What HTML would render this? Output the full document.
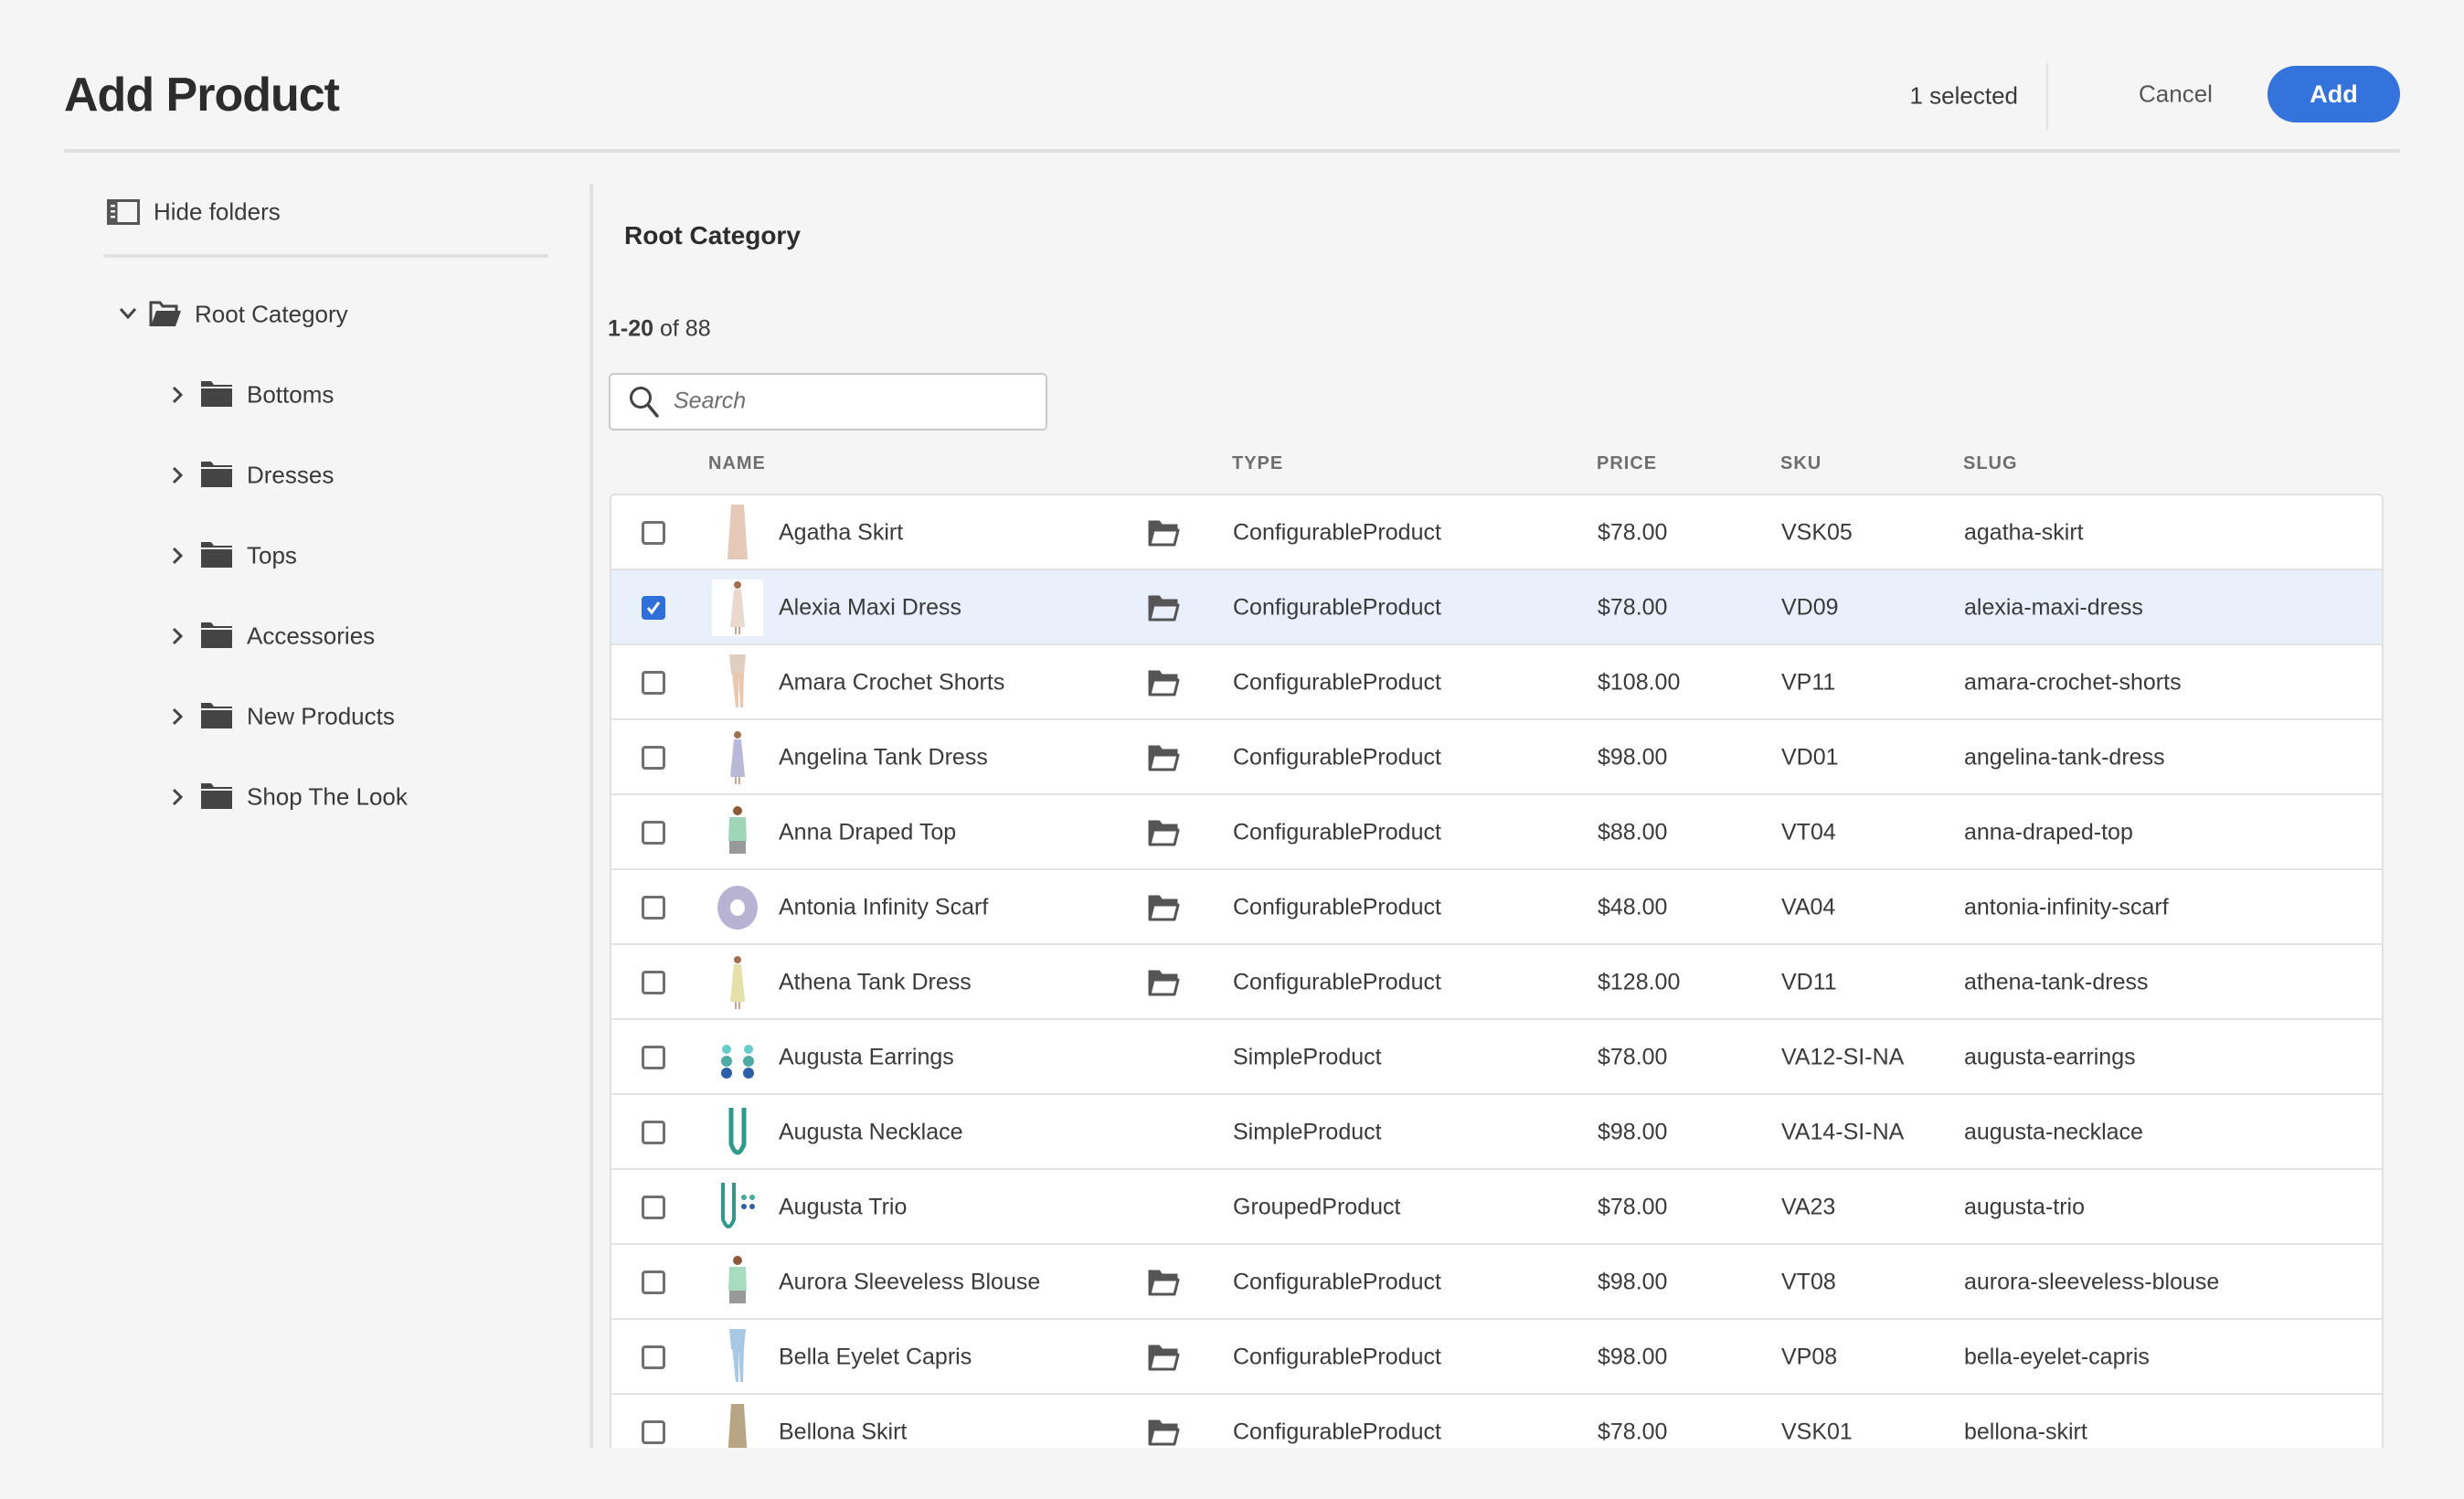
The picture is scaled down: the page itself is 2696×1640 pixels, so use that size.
<!DOCTYPE html>
<html><head><meta charset="utf-8"><style>
*{margin:0;padding:0;box-sizing:border-box}
body{width:2696px;height:1640px;background:#f5f5f5;font-family:"Liberation Sans",sans-serif;color:#2c2c2c;position:relative;overflow:hidden}
.a{position:absolute;white-space:nowrap}
.t{font-size:26px;color:#3a3a3a;transform:translateY(-50%)}
.tr{position:absolute;left:0;width:1941px;height:82px;border-bottom:2px solid #e1e1e1;background:#fff}
.tr.sel{background:#e9effb}
.cb{position:absolute;left:33px;top:28px;width:26px;height:26px;border:3px solid #707070;border-radius:4px}
.sel .cb{background:#2f6fdc;border-color:#2f6fdc}
.cell{position:absolute;top:41px;transform:translateY(-50%);font-size:25px;color:#3a3a3a;white-space:nowrap}
.th{position:absolute;top:496px;font-size:20px;color:#6e6e6e;letter-spacing:1px;font-weight:bold}
.fi{position:absolute;left:586px;top:26px}
.thumb{position:absolute;left:114px;top:10px}
</style></head><body>
<div class="a" style="left:70px;top:74px;font-size:52px;font-weight:bold;color:#2c2c2c;letter-spacing:-1px">Add Product</div>
<div class="a t" style="right:488px;top:105px;font-size:26px">1 selected</div>
<div class="a" style="left:2239px;top:69px;width:2px;height:72px;background:#e1e1e1"></div>
<div class="a t" style="left:2340px;top:103px;font-size:26px;color:#555">Cancel</div>
<div class="a" style="left:2481px;top:72px;width:145px;height:62px;border-radius:31px;background:#3473db;color:#fff;font-size:27px;font-weight:bold;text-align:center;line-height:62px">Add</div>
<div class="a" style="left:70px;top:163px;width:2556px;height:4px;background:#e1e1e1"></div>

<svg class="a" style="left:117px;top:218px" width="36" height="28" viewBox="0 0 36 28"><rect x="1.5" y="1.5" width="33" height="25" fill="none" stroke="#555" stroke-width="3"/><rect x="1.5" y="1.5" width="10" height="25" fill="#555"/><rect x="4" y="6" width="5" height="2.5" fill="#f5f5f5"/><rect x="4" y="12" width="5" height="2.5" fill="#f5f5f5"/><rect x="4" y="18" width="5" height="2.5" fill="#f5f5f5"/></svg>
<div class="a t" style="left:168px;top:232px">Hide folders</div>
<div class="a" style="left:113px;top:278px;width:487px;height:4px;background:#e1e1e1"></div>
<div class="a" style="left:645px;top:201px;width:4px;height:1383px;background:#e1e1e1"></div>

<svg class="a" style="left:130px;top:336px" width="20" height="14" viewBox="0 0 20 14"><path d="M2 2 L10 11 L18 2" fill="none" stroke="#444" stroke-width="3"/></svg>
<svg class="a" style="left:163px;top:329px" width="36" height="30" viewBox="0 0 36 30"><path d="M2 28 V2 H12 L15 6 H30 V11" fill="none" stroke="#444" stroke-width="3"/><path d="M2 28 L8 11 H35 L29 28 Z" fill="#444"/></svg>
<div class="a t" style="left:213px;top:344px">Root Category</div>

<div id="tree"></div>

<div class="a t" style="left:683px;top:258px;font-size:28px;font-weight:bold;color:#2c2c2c">Root Category</div>
<div class="a t" style="left:665px;top:360px;font-size:25px"><b>1-20</b> of 88</div>
<div class="a" style="left:666px;top:408px;width:480px;height:63px;border:2px solid #cacaca;border-radius:5px;background:#fff"></div>
<svg class="a" style="left:688px;top:422px" width="34" height="36" viewBox="0 0 34 36"><circle cx="13" cy="13" r="10.5" fill="none" stroke="#444" stroke-width="3"/><path d="M21 21 L31 33" stroke="#444" stroke-width="3.5" stroke-linecap="round"/></svg>
<div class="a t" style="left:737px;top:439px;font-style:italic;color:#6e6e6e;font-size:25px">Search</div>

<div class="th" style="left:775px">NAME</div>
<div class="th" style="left:1348px">TYPE</div>
<div class="th" style="left:1747px">PRICE</div>
<div class="th" style="left:1948px">SKU</div>
<div class="th" style="left:2148px">SLUG</div>

<div class="a" style="left:667px;top:540px;width:1941px;height:1044px;overflow:hidden;border:2px solid #e1e1e1;border-bottom:none;border-radius:6px 6px 0 0;background:#fff" id="tbl"></div>

<script>
var tree=["Bottoms","Dresses","Tops","Accessories","New Products","Shop The Look"];
var h="";
tree.forEach(function(n,i){var y=432+i*88;
h+='<svg class="a" style="left:187px;top:'+(y-10)+'px" width="14" height="20" viewBox="0 0 14 20"><path d="M3 2 L11 10 L3 18" fill="none" stroke="#444" stroke-width="3"/></svg>';
h+='<svg class="a" style="left:220px;top:'+(y-15)+'px" width="34" height="28" viewBox="0 0 34 28"><path d="M0 0 H11 L14 4 H34 V28 H0 Z" fill="#444"/><rect x="0" y="6" width="34" height="2" fill="#f5f5f5"/></svg>';
h+='<div class="a t" style="left:270px;top:'+y+'px">'+n+'</div>';});
document.getElementById("tree").innerHTML=h;
var C="ConfigurableProduct";
var rows=[
["Agatha Skirt",1,C,"$78.00","VSK05","agatha-skirt","#e6c9b8","skirt"],
["Alexia Maxi Dress",1,C,"$78.00","VD09","alexia-maxi-dress","#ead8cc","dress"],
["Amara Crochet Shorts",1,C,"$108.00","VP11","amara-crochet-shorts","#e0cfc0","legs"],
["Angelina Tank Dress",1,C,"$98.00","VD01","angelina-tank-dress","#b9b8d8","dress"],
["Anna Draped Top",1,C,"$88.00","VT04","anna-draped-top","#9fd6b8","top"],
["Antonia Infinity Scarf",1,C,"$48.00","VA04","antonia-infinity-scarf","#b8b3d3","scarf"],
["Athena Tank Dress",1,C,"$128.00","VD11","athena-tank-dress","#e4e0a8","dress"],
["Augusta Earrings",0,"SimpleProduct","$78.00","VA12-SI-NA","augusta-earrings","#4fa9a4","ear"],
["Augusta Necklace",0,"SimpleProduct","$98.00","VA14-SI-NA","augusta-necklace","#2f9a8c","neck"],
["Augusta Trio",0,"GroupedProduct","$78.00","VA23","augusta-trio","#2f9a8c","trio"],
["Aurora Sleeveless Blouse",1,C,"$98.00","VT08","aurora-sleeveless-blouse","#a8dcc0","top"],
["Bella Eyelet Capris",1,C,"$98.00","VP08","bella-eyelet-capris","#a9c8e6","legs"],
["Bellona Skirt",1,C,"$78.00","VSK01","bellona-skirt","#b8a584","skirt"]];
function thumb(k,c){var s='<svg class="thumb" width="48" height="62" viewBox="0 0 48 62">';
if(k=="skirt")s+='<path d="M17 0 H31 L35 60 H13 Z" fill="'+c+'"/>';
else if(k=="dress")s+='<circle cx="24" cy="6" r="4" fill="#a07050"/><path d="M20 11 H28 L32 52 H16 Z" fill="'+c+'"/><rect x="21" y="52" width="2" height="8" fill="#c8a890"/><rect x="25" y="52" width="2" height="8" fill="#c8a890"/>';
else if(k=="legs")s+='<path d="M15 0 H33 L31 22 H17 Z" fill="'+c+'"/><path d="M18 20 L22 58 H25 L25 24 L27 58 H30 L31 20 Z" fill="'+(c=="#a9c8e6"?c:"#e8c8b0")+'"/>';
else if(k=="top")s+='<circle cx="24" cy="7" r="5" fill="#8a5a3a"/><path d="M15 14 H33 L34 40 H14 Z" fill="'+c+'"/><rect x="15" y="40" width="18" height="14" fill="#999"/>';
else if(k=="scarf")s+='<ellipse cx="24" cy="31" rx="22" ry="24" fill="'+c+'"/><ellipse cx="24" cy="31" rx="8" ry="9" fill="#fff"/>';
else if(k=="ear")s+='<circle cx="12" cy="22" r="5" fill="#6cc"/><circle cx="12" cy="35" r="6" fill="'+c+'"/><circle cx="12" cy="48" r="6" fill="#2d5fa8"/><circle cx="36" cy="22" r="5" fill="#6cc"/><circle cx="36" cy="35" r="6" fill="'+c+'"/><circle cx="36" cy="48" r="6" fill="#2d5fa8"/>';
else if(k=="neck")s+='<path d="M17 4 V44 Q24 62 31 44 V4" fill="none" stroke="'+c+'" stroke-width="5"/>';
else s+='<path d="M8 4 V44 Q14 60 20 44 V4" fill="none" stroke="'+c+'" stroke-width="4"/><circle cx="31" cy="20" r="3" fill="#4a9"/><circle cx="40" cy="20" r="3" fill="#4a9"/><circle cx="31" cy="30" r="3" fill="#2d5fa8"/><circle cx="40" cy="30" r="3" fill="#2d5fa8"/>';
return s+'</svg>';}
var fold='<svg class="fi" width="36" height="30" viewBox="0 0 36 30"><path d="M3 3 H13 L16 7 H32 V12 H7 L3 27 Z" fill="#555"/><path d="M3 28 V3 H13 L16 7 H32 V12" fill="none" stroke="#555" stroke-width="3"/><path d="M3 28 L7 12 H34 L30 28 Z" fill="none" stroke="#555" stroke-width="3" stroke-linejoin="round"/></svg>';
var t="";
rows.forEach(function(r,i){
t+='<div class="tr'+(i==1?' sel':'')+'" style="top:'+(i*82)+'px"><div class="cb">'+(i==1?'<svg width="20" height="20" viewBox="0 0 20 20" style="position:absolute;left:0;top:0"><path d="M4 10 L8 15 L16 4" fill="none" stroke="#fff" stroke-width="3"/></svg>':'')+'</div>';
t+=(i==1?'<div style="position:absolute;left:110px;top:10px;width:56px;height:62px;background:#fff"></div>':'')+thumb(r[7],r[6]);
t+='<div class="cell" style="left:183px">'+r[0]+'</div>'+(r[1]?fold:'');
t+='<div class="cell" style="left:680px">'+r[2]+'</div><div class="cell" style="left:1079px">'+r[3]+'</div><div class="cell" style="left:1280px">'+r[4]+'</div><div class="cell" style="left:1480px">'+r[5]+'</div></div>';});
document.getElementById("tbl").innerHTML=t;
</script>
</body></html>
